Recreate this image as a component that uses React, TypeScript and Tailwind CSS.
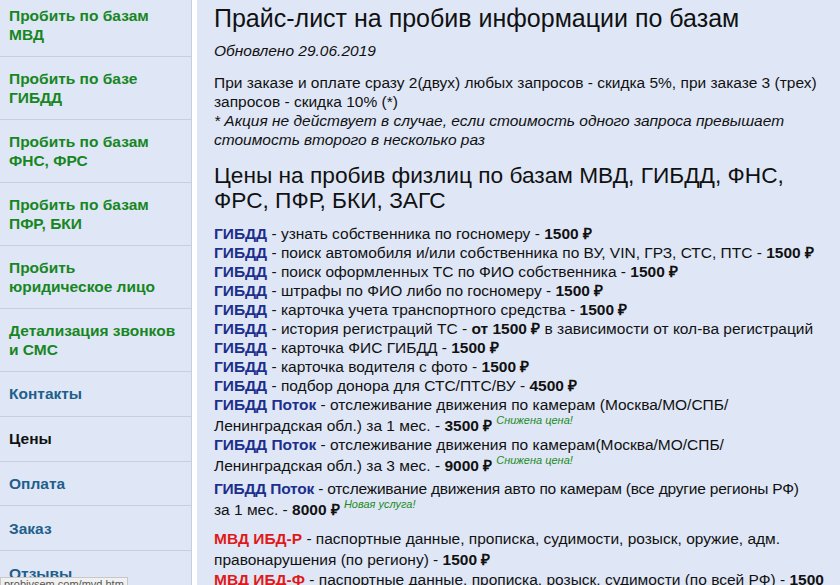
import React from "react";

const navItems = [
  { lines: ["Пробить по базам", "МВД"], color: "text-[#17861f]" },
  { lines: ["Пробить по базе", "ГИБДД"], color: "text-[#17861f]" },
  { lines: ["Пробить по базам", "ФНС, ФРС"], color: "text-[#17861f]" },
  { lines: ["Пробить по базам", "ПФР, БКИ"], color: "text-[#17861f]" },
  { lines: ["Пробить", "юридическое лицо"], color: "text-[#17861f]" },
  { lines: ["Детализация звонков", "и СМС"], color: "text-[#17861f]" },
  { lines: ["Контакты"], color: "text-[#1f5f8b]" },
  { lines: ["Цены"], color: "text-[#111111]" },
  { lines: ["Оплата"], color: "text-[#1f5f8b]" },
  { lines: ["Заказ"], color: "text-[#1f5f8b]" },
  { lines: ["Отзывы"], color: "text-[#1f5f8b]" },
];

function Price({ children }: { children: React.ReactNode }) {
  return <b className="font-bold">{children}</b>;
}

function Note({ children }: { children: React.ReactNode }) {
  return (
    <span className="ml-1 align-[7px] text-[11px] leading-[12px] italic text-[#1c8a1c]">{children}</span>
  );
}

const gibdd = "font-bold text-[#1d2f8c]";
const mvd = "font-bold text-[#e0191b]";

export default function App() {
  return (
    <div
      className="relative flex h-[585px] w-[840px] overflow-hidden bg-white"
      style={{ fontFamily: '"Liberation Sans", Arial, sans-serif' }}
    >
      {/* Sidebar */}
      <nav className="w-[192px] shrink-0 border-r border-[#c7cfdc] bg-[#dfe7f6]">
        <ul className="-mt-[6px]">
          {navItems.map((item) => (
            <li
              key={item.lines[0]}
              className={`border-b border-[#c9d0dc] px-[9px] text-[15.5px] font-bold leading-[19px] ${
                item.lines.length > 1 ? "py-[12px]" : "py-[12.4px]"
              } ${item.color}`}
            >
              {item.lines.map((l) => (
                <div key={l}>{l}</div>
              ))}
            </li>
          ))}
        </ul>
      </nav>

      {/* Content */}
      <main className="ml-[5px] flex-1 bg-[#dfe7f6] pl-[17px] pr-[8px] text-[15.5px] leading-[19px] text-[#111]">
        <h1 className="mt-[4px] text-[25px] leading-[28px] text-[#111]">
          Прайс-лист на пробив информации по базам
        </h1>
        <p className="mt-[9px] italic">Обновлено 29.06.2019</p>
        <p className="mt-[13px]">
          При заказе и оплате сразу 2(двух) любых запросов - скидка 5%, при заказе 3 (трех)
          запросов - скидка 10% (*)
          <br />
          <i>* Акция не действует в случае, если стоимость одного запроса превышает стоимость второго в несколько раз</i>
        </p>
        <h2 className="mt-[14px] text-[22.7px] leading-[25px]">
          Цены на пробив физлиц по базам МВД, ГИБДД, ФНС, ФРС, ПФР, БКИ, ЗАГС
        </h2>
        <div className="mt-[11px]">
          <div><span className={gibdd}>ГИБДД</span> - узнать собственника по госномеру - <Price>1500 ₽</Price></div>
          <div className="whitespace-nowrap"><span className={gibdd}>ГИБДД</span> - поиск автомобиля и/или собственника по ВУ, VIN, ГРЗ, СТС, ПТС - <Price>1500 ₽</Price></div>
          <div><span className={gibdd}>ГИБДД</span> - поиск оформленных ТС по ФИО собственника - <Price>1500 ₽</Price></div>
          <div><span className={gibdd}>ГИБДД</span> - штрафы по ФИО либо по госномеру - <Price>1500 ₽</Price></div>
          <div><span className={gibdd}>ГИБДД</span> - карточка учета транспортного средства - <Price>1500 ₽</Price></div>
          <div className="whitespace-nowrap"><span className={gibdd}>ГИБДД</span> - история регистраций ТС - <Price>от 1500 ₽</Price> в зависимости от кол-ва регистраций</div>
          <div><span className={gibdd}>ГИБДД</span> - карточка ФИС ГИБДД - <Price>1500 ₽</Price></div>
          <div><span className={gibdd}>ГИБДД</span> - карточка водителя с фото - <Price>1500 ₽</Price></div>
          <div><span className={gibdd}>ГИБДД</span> - подбор донора для СТС/ПТС/ВУ - <Price>4500 ₽</Price></div>
          <div>
            <span className={gibdd}>ГИБДД Поток</span> - отслеживание движения по камерам (Москва/МО/СПБ/<br />
            Ленинградская обл.) за 1 мес. - <Price>3500 ₽</Price>
            <Note>Снижена цена!</Note>
          </div>
          <div>
            <span className={gibdd}>ГИБДД Поток</span> - отслеживание движения по камерам(Москва/МО/СПБ/<br />
            Ленинградская обл.) за 3 мес. - <Price>9000 ₽</Price>
            <Note>Снижена цена!</Note>
          </div>
          <div className="mt-[4px]">
            <span className="whitespace-nowrap tracking-[-0.2px]">
              <span className={gibdd}>ГИБДД Поток</span> - отслеживание движения авто по камерам (все другие регионы РФ)
            </span>
            <br />
            за 1 мес. - <Price>8000 ₽</Price>
            <Note>Новая услуга!</Note>
          </div>
          <div className="mt-[9px] leading-[21px]">
            <span className={mvd}>МВД ИБД-Р</span> - паспортные данные, прописка, судимости, розыск, оружие, адм. правонарушения (по региону) - <Price>1500 ₽</Price>
          </div>
          <div className="leading-[20px]">
            <span className={mvd}>МВД ИБД-Ф</span> - паспортные данные, прописка, розыск, судимости (по всей РФ) - <Price>1500 ₽</Price>
          </div>
        </div>
      </main>

      {/* Browser status bar */}
      <div className="absolute bottom-[-6px] left-0 h-[14px] border border-[#c8c8c8] bg-[#f0f0f0] px-[3px] text-[11px] leading-[12px] text-[#555]">
        probivsem.com/mvd.htm
      </div>
    </div>
  );
}
